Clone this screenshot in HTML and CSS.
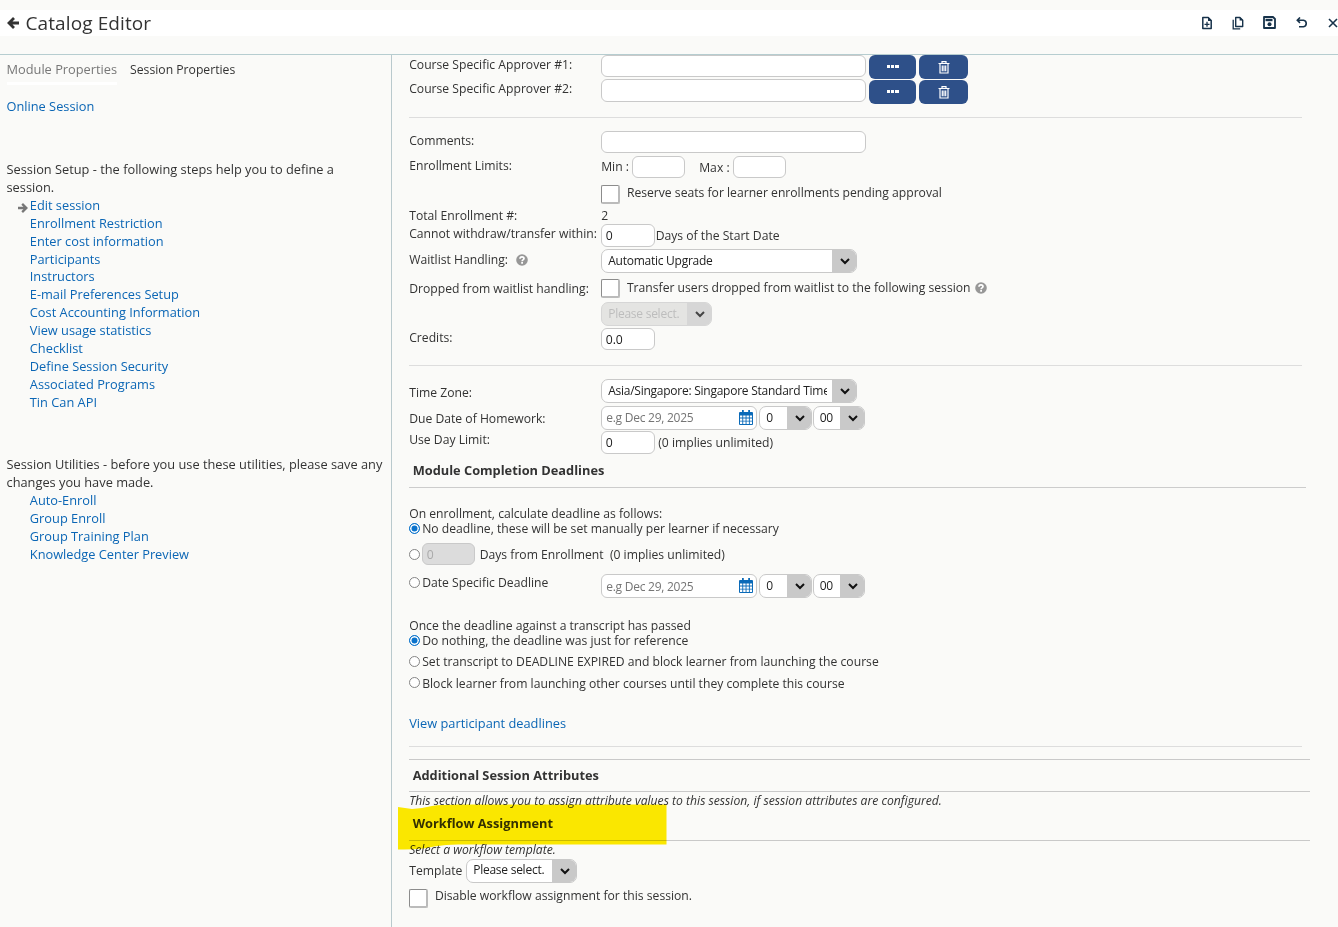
FILE: index.html
```html
<!DOCTYPE html>
<html lang="en">
<head>
<meta charset="utf-8">
<title>Catalog Editor</title>
<link rel="stylesheet" href="styles.css">
</head>
<body>
<svg class="defs" width="0" height="0">
  <symbol id="chev" viewBox="0 0 10 7"><path d="M1 1l4 4 4-4" fill="none" stroke="currentColor" stroke-width="2"/></symbol>
  <symbol id="help" viewBox="0 0 12 12"><circle cx="6" cy="6" r="5.8" fill="#979797"/><path d="M4 4.700c0-2.600 4-2.400 4-.1 0 1.300-1.900 1.300-1.900 2.600" fill="none" stroke="#fff" stroke-width="1.700"/><path d="M5.200 8.100h1.800v1.600H5.200z" fill="#fff"/></symbol>
  <symbol id="trash" viewBox="0 0 12 13"><path d="M.5 2.500h11M4 2.500V.700h4v1.800M2 3v9h8V3M4.300 4.500v5.800M6 4.500v5.800M7.700 4.500v5.800" fill="none" stroke="#fff" stroke-width="1.200"/></symbol>
  <symbol id="cal" viewBox="0 0 14 15"><path d="M1 2h12a1 1 0 0 1 1 1v11a1 1 0 0 1-1 1H1a1 1 0 0 1-1-1V3a1 1 0 0 1 1-1z" fill="#0a6ab8"/><path d="M3 0h1.800v4H3zM9.200 0H11v4H9.200z" fill="#0a6ab8"/><path d="M1 5.600h2.300v2H1zM4.200 5.600h2.400v2H4.200zM7.500 5.600h2.400v2H7.500zM10.800 5.600H13v2h-2.200zM1 8.500h2.300v2.200H1zM4.200 8.500h2.400v2.200H4.200zM7.500 8.500h2.400v2.200H7.500zM10.800 8.500H13v2.200h-2.200zM1 11.600h2.300V14H1zM4.200 11.600h2.400V14H4.200zM7.500 11.600h2.400V14H7.500zM10.800 11.600H13V14h-2.200z" fill="#fff"/></symbol>
  <symbol id="left" viewBox="0 0 12 12"><path d="M7 1L2 6l5 5M2.300 6H12" fill="none" stroke="currentColor" stroke-width="2.800"/></symbol>
</svg>
<header class="topbar">
  <svg class="back" width="12" height="12"><use href="#left"/></svg>
  <h1>Catalog Editor</h1>
  <div class="tools">
    <svg width="12" height="14" viewBox="0 0 12 14"><path d="M1.800 1.500h5.400l3 3v8H1.800z" fill="none" stroke="currentColor" stroke-width="1.500" stroke-linejoin="round"/><path d="M7 1v4h4z" fill="currentColor"/><path d="M6 5.800v5M3.500 8.300h5" stroke="currentColor" stroke-width="1.300"/></svg>
    <svg width="12" height="14" viewBox="0 0 12 14"><path d="M3.700 1.500h4.200l2.800 2.800v6.200h-7z" fill="none" stroke="currentColor" stroke-width="1.400" stroke-linejoin="round"/><path d="M7.600 1v3.600h3.600z" fill="currentColor"/><path d="M1.200 3.800v9h7" fill="none" stroke="currentColor" stroke-width="1.300"/></svg>
    <svg class="save" width="13" height="13" viewBox="0 0 13 13"><path d="M1 1h9l2 2v9H1z" fill="none" stroke="currentColor" stroke-width="1.800" stroke-linejoin="round"/><path d="M2.500 2.800h7v2.400h-7z" fill="currentColor"/><circle cx="6.500" cy="8.300" r="2" fill="currentColor"/></svg>
    <svg width="12" height="12" viewBox="0 0 12 12"><path d="M4 .500L1.300 3.200 4 5.900M1.600 3.200h5.900a3.300 3.300 0 0 1 0 6.500H3" fill="none" stroke="currentColor" stroke-width="1.600"/></svg>
    <svg width="10" height="10" viewBox="0 0 10 10"><path d="M1 1l8 8M9 1L1 9" stroke="currentColor" stroke-width="1.600"/></svg>
  </div>
</header>
<div class="body">
  <aside class="side">
    <nav class="tabs"><span class="tab active">Module Properties</span><span class="tab">Session Properties</span></nav>
    <a class="online">Online Session</a>
    <p class="setup">Session Setup - the following steps help you to define a session.</p>
    <ul>
      <li class="current"><svg class="arrow" width="10" height="10"><use href="#left"/></svg><a>Edit session</a></li>
      <li><a>Enrollment Restriction</a></li>
      <li><a>Enter cost information</a></li>
      <li><a>Participants</a></li>
      <li><a>Instructors</a></li>
      <li><a>E-mail Preferences Setup</a></li>
      <li><a>Cost Accounting Information</a></li>
      <li><a>View usage statistics</a></li>
      <li><a>Checklist</a></li>
      <li><a>Define Session Security</a></li>
      <li><a>Associated Programs</a></li>
      <li><a>Tin Can API</a></li>
    </ul>
    <p class="utils">Session Utilities - before you use these utilities, please save any changes you have made.</p>
    <ul class="even">
      <li><a>Auto-Enroll</a></li>
      <li><a>Group Enroll</a></li>
      <li><a>Group Training Plan</a></li>
      <li><a>Knowledge Center Preview</a></li>
    </ul>
  </aside>
  <main class="form">
    <div class="row h24"><label class="lab">Course Specific Approver #1:</label><input class="inp wide"><button class="btn dots"><i></i><i></i><i></i></button><button class="btn bin"><svg width="12" height="13"><use href="#trash"/></svg></button></div>
    <div class="row h38"><label class="lab">Course Specific Approver #2:</label><input class="inp wide tall"><button class="btn dots d1"><i></i><i></i><i></i></button><button class="btn bin d1"><svg width="12" height="13"><use href="#trash"/></svg></button></div>
    <hr class="soft">
    <div class="row h25 gap13"><label class="lab">Comments:</label><input class="inp wide"></div>
    <div class="row h29"><label class="lab">Enrollment Limits:</label><span class="minlab d1">Min :</span><input class="inp mini"><span class="maxlab d2">Max :</span><input class="inp mini"></div>
    <div class="row h21"><span class="lab"></span><span class="check"></span><span class="checktext up2">Reserve seats for learner enrollments pending approval</span></div>
    <div class="row h18"><span class="lab">Total Enrollment #:</span><span>2</span></div>
    <div class="row h25"><label class="lab">Cannot withdraw/transfer within:</label><input class="inp small tall" value="0"><span class="d2 after">Days of the Start Date</span></div>
    <div class="row h30"><label class="lab d1">Waitlist Handling: <svg class="q" width="12" height="12"><use href="#help"/></svg></label><div class="sel w256"><span>Automatic Upgrade</span><b><svg width="10" height="7"><use href="#chev"/></svg></b></div></div>
    <div class="row h23"><label class="lab">Dropped from waitlist handling:</label><span class="check"></span><span class="checktext up1">Transfer users dropped from waitlist to the following session <svg class="q2" width="12" height="12"><use href="#help"/></svg></span></div>
    <div class="row h26"><span class="lab"></span><div class="sel w111 off"><span>Please select.</span><b><svg width="10" height="7"><use href="#chev"/></svg></b></div></div>
    <div class="row h37"><label class="lab">Credits:</label><input class="inp small" value="0.0"></div>
    <hr class="soft">
    <div class="row h27 gap13"><label class="lab d4">Time Zone:</label><div class="sel w256"><span>Asia/Singapore: Singapore Standard Time</span><b><svg width="10" height="7"><use href="#chev"/></svg></b></div></div>
    <div class="row h24"><label class="lab d3">Due Date of Homework:</label><div class="date"><span>e.g Dec 29, 2025</span><svg width="14" height="15"><use href="#cal"/></svg></div><div class="sel hour"><span>0</span><b><svg width="10" height="7"><use href="#chev"/></svg></b></div><div class="sel minute"><span>00</span><b><svg width="10" height="7"><use href="#chev"/></svg></b></div></div>
    <div class="row h31"><label class="lab">Use Day Limit:</label><input class="inp small tall d1" value="0"><span class="d3 after3">(0 implies unlimited)</span></div>
    <h2 class="mod">Module Completion Deadlines</h2>
    <p class="lead">On enrollment, calculate deadline as follows:</p>
    <div class="row h24 rad"><i class="radio on r4"></i><span>No deadline, these will be set manually per learner if necessary</span></div>
    <div class="row h31 rad"><i class="radio r6"></i><input class="inp mini dis" value="0"><span class="d2 days">Days from Enrollment&nbsp; (0 implies unlimited)</span></div>
    <div class="row h42 rad"><i class="radio r3"></i><span class="datelab up1">Date Specific Deadline</span><div class="date low"><span>e.g Dec 29, 2025</span><svg width="14" height="15"><use href="#cal"/></svg></div><div class="sel hour"><span>0</span><b><svg width="10" height="7"><use href="#chev"/></svg></b></div><div class="sel minute"><span>00</span><b><svg width="10" height="7"><use href="#chev"/></svg></b></div></div>
    <p class="once">Once the deadline against a transcript has passed</p>
    <div class="row h21 rad"><i class="radio on r4"></i><span>Do nothing, the deadline was just for reference</span></div>
    <div class="row h21 rad"><i class="radio r4"></i><span>Set transcript to DEADLINE EXPIRED and block learner from launching the course</span></div>
    <div class="row h41 rad"><i class="radio r4"></i><span class="d1">Block learner from launching other courses until they complete this course</span></div>
    <a class="viewlink">View participant deadlines</a>
    <hr class="soft">
    <h2 class="attrs">Additional Session Attributes</h2>
    <p class="note">This section allows you to assign attribute values to this session, if session attributes are configured.</p>
    <h2 class="flow">Workflow Assignment
      <svg class="marker" width="270" height="47" viewBox="0 0 270 47"><path d="M0 3L14 5Q24 4.500 34 2Q42 .500 60 .500H268.500V40.500H60Q48 40.500 36 42.500Q24 46 0 45.500z" fill="#ffec00"/></svg>
    </h2>
    <p class="note">Select a workflow template.</p>
    <div class="row h31 last"><label class="tmpl d2">Template</label><div class="sel w111 raised"><span>Please select.</span><b><svg width="10" height="7"><use href="#chev"/></svg></b></div></div>
    <div class="row"><span class="check"></span><span class="checktext up3">Disable workflow assignment for this session.</span></div>
  </main>
</div>
</body>
</html>
```
FILE: styles.css
```css
* { box-sizing: border-box; }
body {
  margin: 0;
  padding-top: 10px;
  width: 1338px;
  height: 927px;
  overflow: hidden;
  background: #fafaf8;
  color: #333;
  font-family: "Open Sans", sans-serif;
  font-size: 12.17px;
  line-height: 18px;
}
.defs { position: absolute; }
p, h1, h2, ul { margin: 0; padding: 0; }
ul { list-style: none; }
svg { display: block; flex: none; }
a { color: #0b66b5; }

.topbar { display: flex; align-items: center; height: 26px; padding-left: 7px; background: #fff; overflow: hidden; }
.back { color: #333; margin-right: 6.5px; }
h1 { font-size: 19px; font-weight: 400; line-height: 26px; letter-spacing: .1px; }
.tools { display: flex; align-items: center; justify-content: space-between; width: 137.5px; margin-left: auto; color: #17324a; flex: none; }
.save { margin: 0 1px 1px -1px; }

.body { display: flex; height: 873px; margin-top: 18px; border-top: 1px solid #b6cdd0; }
.side { width: 392px; padding: 6px 0 0 6.5px; border-right: 1px solid #b9c9cd; font-size: 12.8px; line-height: 17.9px; flex: none; }
.tabs { display: flex; gap: 13px; height: 37px; margin-top: -1px; }
.tab { height: 25px; font-size: 12.2px; line-height: 20px; }
.tab.active { color: #777; font-size: 12.8px; line-height: 18px; border-bottom: 3px solid #fff; }
.online { display: block; height: 63px; margin-top: 1px; }
.setup { width: 340px; }
.side li { display: flex; padding-left: 23.3px; }
.side li.current { padding-left: 11.3px; }
.even { margin-top: -.7px; line-height: 18px; }
.arrow { color: #777; margin: 6px 2px 0 0; transform: scaleX(-1); }
.utils { margin-top: 44px; }

.form { flex: 1; padding-left: 17.2px; line-height: 20px; }
.row { display: flex; align-items: flex-start; white-space: nowrap; }
.h18 { height: 18px; } .h21 { height: 21px; } .h23 { height: 23px; } .h24 { height: 24px; }
.h25 { height: 25px; } .h26 { height: 26px; } .h27 { height: 27px; } .h29 { height: 29px; }
.h30 { height: 30px; } .h31 { height: 31px; } .h37 { height: 37px; } .h38 { height: 38px; }
.h41 { height: 41px; } .h42 { height: 42px; }
.h31.last { height: 30px; }
.gap13 { margin-top: 13px; }
.d1 { margin-top: 1px; } .d2 { margin-top: 2px; } .d3 { margin-top: 3px; } .d4 { margin-top: 4px; }
.up1 { margin-top: -1px; } .up2 { margin-top: -2px; } .up3 { margin-top: -3px; }
.lab { display: flex; width: 192px; flex: none; }
.q { margin: 4px 0 0 7.500px; }
.q2 { display: inline-block; vertical-align: -1.500px; margin-left: 1px; }
hr.soft { width: 893px; height: 1px; margin: 0; border: 0; background: #ddd; }

.inp { height: 22px; padding: 0 3.5px; border: 1px solid #c9c9c9; border-radius: 6px; background: #fff; color: #222; font: 12.2px "Open Sans", sans-serif; outline: 0; }
.inp.tall { height: 23px; }
.inp.wide { width: 265px; margin-right: 3px; }
.inp.small { width: 54px; }
.inp.mini { width: 53px; }
.inp.dis { background: #dcdcdc; color: #aaa; }
.btn { display: flex; align-items: center; justify-content: center; height: 24px; padding: 0; border: 0; border-radius: 6px; background: #2e5089; flex: none; }
.dots { width: 47px; gap: 1px; margin-right: 3px; }
.dots i { width: 3.4px; height: 3px; margin-bottom: 1px; background: #fff; }
.bin { width: 49px; }
.minlab { width: 31px; }
.maxlab { width: 34px; margin-left: 14px; }
.after { margin-left: .5px; }
.after3 { margin-left: 3px; }
.check { width: 19px; height: 19px; margin-right: 6.7px; border: 1px solid #8c8c8c; border-right: 2px solid #bbb; border-bottom: 2px solid #bbb; border-radius: 2px; background: #fff; flex: none; }

.sel { display: flex; height: 24px; border: 1px solid #c9c9c9; border-radius: 7px; background: #fff; color: #222; overflow: hidden; font-size: 12px; letter-spacing: -.25px; line-height: 21px; flex: none; }
.sel span { flex: 1; min-width: 0; overflow: hidden; margin: 0 5px 0 6px; }
.sel b { display: flex; width: 24px; align-items: center; justify-content: center; padding-left: 1px; background: #c9c9c9; color: #111; }
.sel.raised { line-height: 20px; }
.w256 { width: 256px; }
.w111 { width: 111px; }
.off { background: #e4e4e2; border-color: #d6d6d6; color: #bdbdbd; }
.off b { background: #d6d6d6; color: #444; }
.date { display: flex; align-items: center; justify-content: space-between; width: 156px; height: 24px; margin-right: 2px; padding: 0 3px 0 4px; border: 1px solid #c9c9c9; border-radius: 6px; background: #fff; color: #757575; font-size: 12px; letter-spacing: -.25px; flex: none; }
.date svg { margin-bottom: 2px; }
.date.low span { padding-top: 2px; }
.hour { width: 53px; }
.minute { width: 52.5px; margin-left: .5px; }

h2 { font-size: 12.8px; line-height: 18px; font-weight: 700; padding-left: 3.5px; }
.mod { width: 897px; height: 27px; border-bottom: 1px solid #ccc; }
.lead { margin-top: 16px; height: 15px; }
.radio { width: 11px; height: 11px; margin-right: 2px; border: 1px solid #858585; border-radius: 50%; background: #fff; flex: none; }
.radio.on { border-color: #0a73cc; background: #0a73cc; box-shadow: inset 0 0 0 1.500px #fff; }
.r3 { margin-top: 3px; } .r4 { margin-top: 4px; } .r6 { margin-top: 6px; }
.days { margin-left: 4.5px; }
.datelab { width: 179px; }
.once { height: 15px; }
.viewlink { display: block; height: 32px; font-size: 12.8px; line-height: 18px; }
.attrs { width: 901px; height: 33px; margin-top: 12px; padding-top: 6px; border: 1px solid #c9c9c9; border-width: 1px 0; }
.note { height: 18px; font-size: 12.16px; line-height: 18px; font-style: italic; }
.flow { position: relative; width: 901px; height: 31px; padding-top: 4px; border-bottom: 1px solid #c9c9c9; }
.marker { position: absolute; left: -11px; top: -6px; mix-blend-mode: multiply; }
.tmpl { width: 57px; }
```
